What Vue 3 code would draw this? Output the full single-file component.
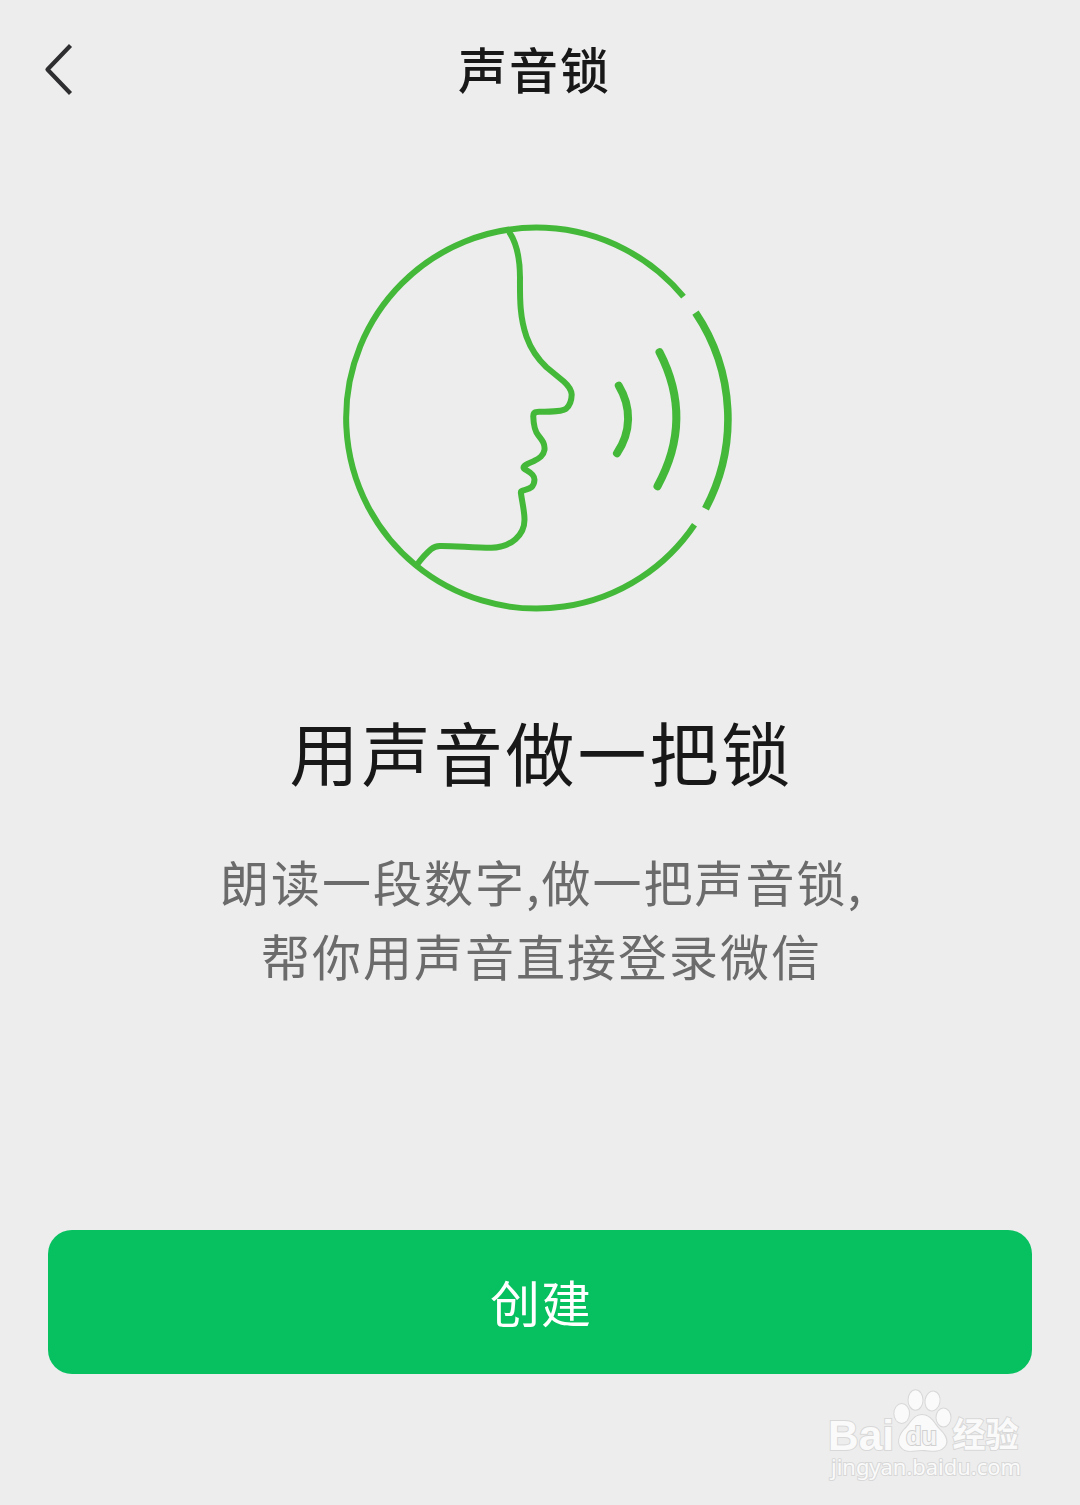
<script setup>
const lines = ['朗读一段数字,做一把声音锁,', '帮你用声音直接登录微信']

function goBack() {
  window.history.back()
}
</script>

<template>
  <div class="page">
    <header class="nav">
      <button class="back" type="button" aria-label="返回" @click="goBack">
        <svg width="34" height="56" viewBox="0 0 34 56">
          <path d="M29.5 3.500 6.500 27.500l23 24" />
        </svg>
      </button>
      <h1 class="nav-title">声音锁</h1>
    </header>

    <main class="content">
      <svg class="voice" width="410" height="410" viewBox="334.500 214.300 410 410">
        <path d="M683 296A190.5 190.5 0 1 0 694 524" />
        <path class="outer" d="M695 312A190.5 190.5 0 0 1 705 508" />
        <path
          class="face"
          d="M508.5 231C516 242 519.5 256 519.5 277C519.3 300 519.5 317 526 336C531 350 537 358 546 366.500L563 380.500C567 384 571 389 571.200 394C571 400 569 405 566 407.500C563 411 549 411 536.500 411.200Q532.500 411.500 532.800 416C533 424 534 430 538 435C542 440 544.500 443 544 449C543 455 539 457.500 533 460.500C527 463 523 465 523 467C523 469.500 534 471 534 479C533.500 488 528 488 522 490Q520 490.500 520.500 493C522 503 524 511 524 519C524 534 511 546.500 491 547C472 547 455 545 440 545.200Q434.500 545 430.500 548.500Q424 554 416.800 563.500"
        />
        <path class="wave" d="M618.3 385C631 406 631 431 616.500 452.500" />
        <path class="wave" d="M659 351.500C682 396 682 440 657 485.500" />
      </svg>

      <h2 class="title">用声音做一把锁</h2>
      <p class="desc">
        <span v-for="line in lines" :key="line">{{ line }}</span>
      </p>
    </main>

    <button class="create" type="button">创建</button>

    <svg class="watermark" width="210" height="105" viewBox="820 1385 210 105">
      <g class="mark">
        <text class="latin" x="828" y="1449.500" textLength="66" lengthAdjust="spacingAndGlyphs">Bai</text>
        <ellipse cx="901.700" cy="1413.500" rx="7.300" ry="9.500" />
        <ellipse cx="915.500" cy="1400" rx="7" ry="9.700" />
        <ellipse cx="932.500" cy="1401" rx="7" ry="9.500" transform="rotate(10 932.500 1401)" />
        <ellipse cx="943.500" cy="1417.500" rx="7" ry="9" />
        <path d="M922 1415C931 1415 934 1424 940 1430C947 1437 948 1443 944 1447C939 1453 930 1450 922 1450C914 1450 907 1453 902 1448C897 1443 899 1436 904 1430C911 1424 913 1415 922 1415Z" />
        <text class="cjk" x="952.500" y="1447" textLength="66" lengthAdjust="spacingAndGlyphs">经验</text>
        <text class="url" x="831" y="1475" textLength="190" lengthAdjust="spacingAndGlyphs">jingyan.baidu.com</text>
      </g>
      <text class="du" x="906" y="1445" textLength="31" lengthAdjust="spacingAndGlyphs">du</text>
    </svg>
  </div>
</template>

<style>
body {
  margin: 0;
  background: #ededed;
}
</style>

<style scoped>
.page {
  position: relative;
  box-sizing: border-box;
  height: 1505px;
  padding: 0 48px;
  display: flex;
  flex-direction: column;
  overflow: hidden;
  background: #ededed;
  color: #181818;
  font-family: 'Noto Sans CJK SC', 'Noto Sans', sans-serif;
}

.nav {
  height: 140px;
  display: grid;
  grid-template-columns: 80px 1fr 80px;
  align-items: center;
  margin: 0 7px 0 -7px;
}

.back {
  padding: 0;
  border: none;
  background: none;
  display: flex;
  cursor: pointer;
}

.back path {
  fill: none;
  stroke: #2e2e30;
  stroke-width: 4.2;
  stroke-linejoin: round;
}

.nav-title {
  margin: 0;
  padding: 0 0 4px 3px;
  font-size: 49px;
  font-weight: 500;
  line-height: 72px;
  letter-spacing: 2px;
  text-align: center;
}

.content {
  display: flex;
  flex-direction: column;
  align-items: center;
  padding-top: 75px;
}

.voice {
  flex: none;
  fill: none;
  stroke: #44b939;
  stroke-width: 6;
}

.outer {
  stroke-width: 7.6;
}

.face {
  stroke-linejoin: round;
}

.wave {
  stroke-width: 8;
  stroke-linecap: round;
}

.title {
  margin: 76px 0 0;
  padding-left: 3px;
  font-size: 69px;
  font-weight: 400;
  line-height: 100px;
  letter-spacing: 3px;
}

.desc {
  margin: 43px 0 0;
  padding-left: 3px;
  display: flex;
  flex-direction: column;
  align-items: center;
  color: #6b6b6b;
  font-size: 49px;
  line-height: 74px;
  letter-spacing: 2px;
}

.create {
  height: 144px;
  margin: auto 0 131px;
  padding: 0 0 3px 2px;
  border: none;
  border-radius: 24px;
  background: #07c160;
  color: #fff;
  font-family: inherit;
  font-size: 50px;
  letter-spacing: 1px;
  cursor: pointer;
}

.watermark {
  position: absolute;
  right: 50px;
  bottom: 15px;
  pointer-events: none;
}

.mark {
  fill: #fafafa;
  stroke: #d8d8d8;
  stroke-width: 2;
  paint-order: stroke;
}

.latin {
  font: bold 43px 'Liberation Sans', sans-serif;
}

.cjk {
  font-size: 34px;
  font-weight: 700;
}

.url {
  font: 22px 'Noto Sans', sans-serif;
}

.du {
  fill: #f5f5f5;
  stroke: #d0d0d0;
  stroke-width: 2;
  paint-order: stroke;
  font: bold 26px 'Liberation Sans', sans-serif;
}
</style>
